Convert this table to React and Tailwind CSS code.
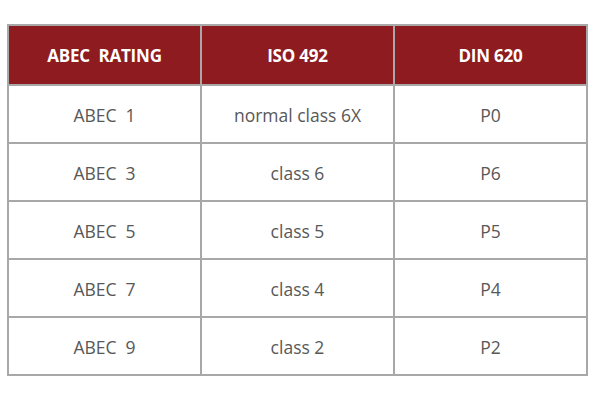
import React from 'react';

const rows = [
  ['ABEC\u00a0\u00a01', 'normal class 6X', 'P0'],
  ['ABEC\u00a0\u00a03', 'class 6', 'P6'],
  ['ABEC\u00a0\u00a05', 'class 5', 'P5'],
  ['ABEC\u00a0\u00a07', 'class 4', 'P4'],
  ['ABEC\u00a0\u00a09', 'class 2', 'P2'],
];

const App = () => {
  return (
    <div className="w-[600px] h-[400px] bg-white pt-[24px] pl-[7px]" style={{ fontFamily: '"Open Sans", sans-serif' }}>
      <table className="w-[581px] border-collapse table-fixed">
        <thead>
          <tr className="h-[60px] bg-[#8e1b1f]">
            <th className="border-2 border-[#a8a8a8] text-white text-[17px] font-bold tracking-[-0.2px] pt-[2px]">ABEC&nbsp;&nbsp;RATING</th>
            <th className="border-2 border-[#a8a8a8] text-white text-[17px] font-bold tracking-[-0.2px] pt-[2px]">ISO 492</th>
            <th className="border-2 border-[#a8a8a8] text-white text-[17px] font-bold tracking-[-0.2px] pt-[2px]">DIN 620</th>
          </tr>
        </thead>
        <tbody>
          {rows.map((r) => (
            <tr key={r[0]} className="h-[58px]">
              {r.map((c, i) => (
                <td key={i} className="border-2 border-[#a8a8a8] text-center text-[17.5px] text-[#585858] pt-[3px]">{c}</td>
              ))}
            </tr>
          ))}
        </tbody>
      </table>
    </div>
  );
};

export default App;
